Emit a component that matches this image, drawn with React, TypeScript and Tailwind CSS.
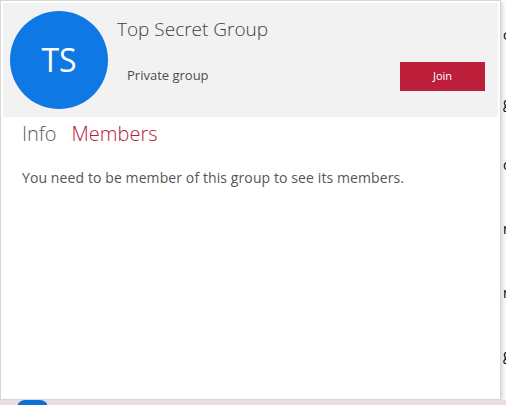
import React from "react"

// Fragmentos de la página que queda detrás del popup (borde derecho)
const fragments = [
	{ text: "c", top: "mt-[26px]", underline: false },
	{ text: "g", top: "mt-[50px]", underline: true },
	{ text: "c", top: "mt-[44px]", underline: false },
	{ text: "n", top: "mt-[46px]", underline: false },
	{ text: "n", top: "mt-[46px]", underline: false },
	{ text: "g", top: "mt-[44px]", underline: true },
]

function GroupCard() {
	return (
		<div className="w-[501px] h-[400px] shrink-0 bg-white border border-[#d6d6d6] shadow-[2px_2px_4px_rgba(0,0,0,0.15)] p-[2px] flex flex-col">
			{/* Cabecera gris con avatar */}
			<div className="h-[114px] bg-[#f2f2f2] flex">
				<div className="w-[98px] h-[98px] rounded-full bg-[#0e78e4] ml-[7px] mt-[8px] flex items-center justify-center text-white text-[32px] leading-none">
					TS
				</div>
				<div className="flex-1 ml-[9px] pr-[13px]">
					<div className="mt-[12px] text-[19px] leading-[28px] text-[#3f3f3f] font-light">
						Top Secret Group
					</div>
					<div className="mt-[17px] flex items-center justify-between">
						<div className="ml-[10px] text-[13px] text-[#4d4d4d]">Private group</div>
						<button className="w-[85px] h-[29px] bg-[#bd1f3b] text-white text-[11px] mt-[2px]">
							Join
						</button>
					</div>
				</div>
			</div>

			{/* Pestañas */}
			<div className="flex gap-[15px] pl-[19px] mt-[3px] text-[20px] leading-[28px] font-light">
				<span className="text-[#5c5c5c]">Info</span>
				<span className="text-[#b3203b]">Members</span>
			</div>

			<p className="pl-[19px] mt-[19px] text-[14px] tracking-[0.1px] text-[#555555]">
				You need to be member of this group to see its members.
			</p>
		</div>
	)
}

export default function App() {
	return (
		<div
			className="w-[506px] h-[405px] overflow-hidden bg-white flex flex-col"
			style={{ fontFamily: '"Open Sans", "Noto Sans", sans-serif' }}
		>
			<div className="flex h-[400px]">
				<GroupCard />
				<div className="flex-1 overflow-hidden flex flex-col pl-[2px] text-[14px] leading-[18px] text-black">
					{fragments.map((f, i) => (
						<span key={i} className={`${f.top} ${f.underline ? "underline" : ""}`}>
							{f.text}
						</span>
					))}
				</div>
			</div>
			{/* Franja inferior de la página de fondo */}
			<div className="h-[5px] bg-[#eadede] flex">
				<div className="ml-[17px] w-[31px] h-[16px] rounded-full bg-[#0e6fd6]" />
			</div>
		</div>
	)
}
